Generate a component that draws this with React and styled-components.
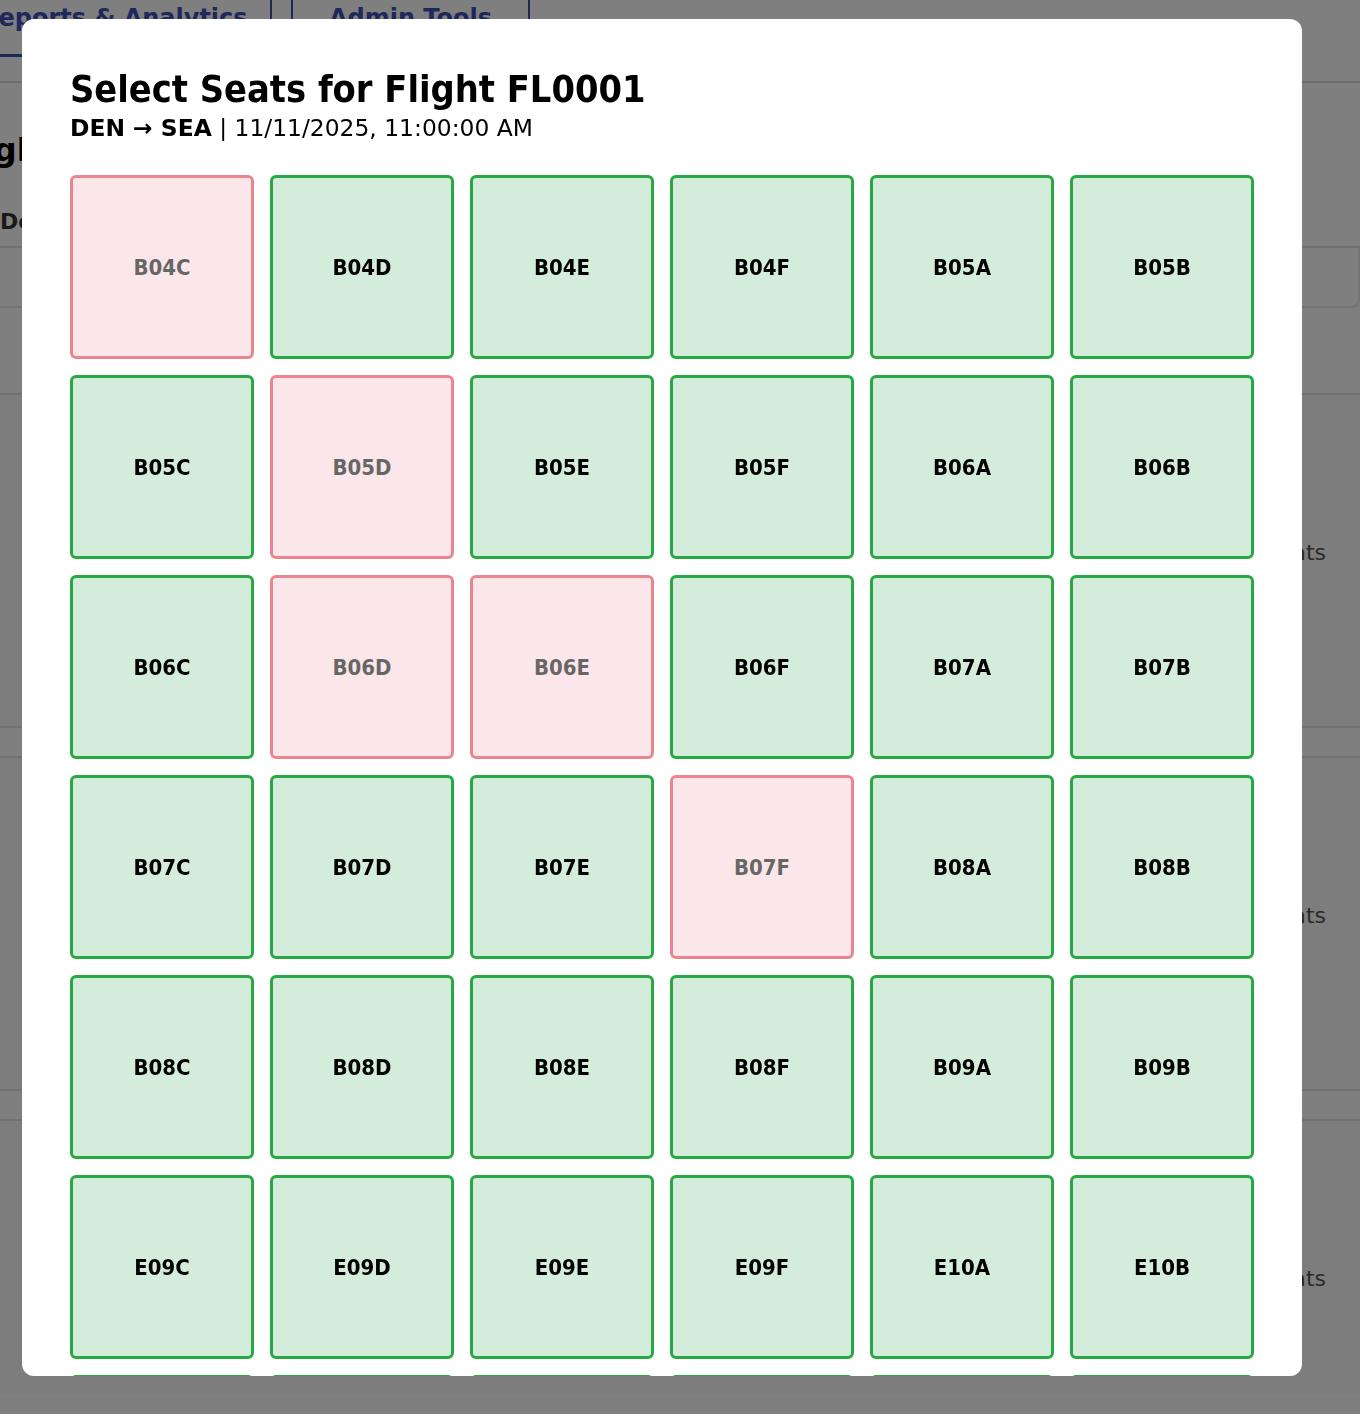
import React from 'react'
import styled, { createGlobalStyle } from 'styled-components'

const GlobalStyle = createGlobalStyle`
  html, body {
    margin: 0;
    padding: 0;
    background: #fff;
  }
  body {
    font-family: "DejaVu Sans", Verdana, sans-serif;
    overflow: hidden;
  }
`

const seats = [
  'B04C', 'B04D', 'B04E', 'B04F', 'B05A', 'B05B',
  'B05C', 'B05D', 'B05E', 'B05F', 'B06A', 'B06B',
  'B06C', 'B06D', 'B06E', 'B06F', 'B07A', 'B07B',
  'B07C', 'B07D', 'B07E', 'B07F', 'B08A', 'B08B',
  'B08C', 'B08D', 'B08E', 'B08F', 'B09A', 'B09B',
  'E09C', 'E09D', 'E09E', 'E09F', 'E10A', 'E10B',
  'E10C', 'E10D', 'E10E', 'E10F', 'E11A', 'E11B',
]

const booked = ['B04C', 'B05D', 'B06D', 'B06E', 'B07F']

/* ---------- page behind the dialog ---------- */

const Page = styled.div`
  height: 1414px;
  margin-left: -40px;
`

const TabBar = styled.div`
  display: flex;
  gap: 19px;
  height: 101px;
  margin-top: -20px;
  border-bottom: 2px solid #dcdcdc;
`

const Tab = styled.div`
  padding: 24px ${p => (p.$first ? 38 : 20)}px 0 20px;
  height: 77px;
  box-sizing: border-box;
  border-right: 2px solid #3f51b5;
  border-left: ${p => (p.$first ? 'none' : '2px solid #3f51b5')};
  border-bottom: ${p => (p.$active ? '3px solid #3f51b5' : 'none')};
  color: #3f51b5;
  font-weight: 700;
  font-size: 24px;
  white-space: nowrap;
  text-align: ${p => (p.$first ? 'right' : 'center')};
  width: ${p => p.$w}px;
`

const PageTitle = styled.h1`
  margin: 48px 0 0 -10px;
  font-size: 32px;
  line-height: 1.2;
  color: #000;
`

const FilterLabel = styled.div`
  margin-top: 40px;
  padding: 0 0 12px 40px;
  font-size: 22px;
  font-weight: 700;
  color: #333;
  border-bottom: 2px solid #e3e3e3;
`

const SearchBox = styled.div`
  height: 60px;
  box-sizing: border-box;
  border: 2px solid #e6e6e6;
  border-top: none;
  border-radius: 0 0 8px 8px;
  margin-bottom: 85px;
`

const FlightCard = styled.div`
  height: 335px;
  box-sizing: border-box;
  background: #fafafa;
  border-top: 2px solid #e2e2e2;
  border-bottom: 2px solid #e2e2e2;
  margin-bottom: 28px;
  display: flex;
  justify-content: flex-end;
  align-items: flex-start;
  padding: 145px 34px 0 0;
  color: #555;
  font-size: 22px;
`

/* ---------- seat dialog ---------- */

const Overlay = styled.div`
  position: fixed;
  inset: 0;
  background: rgba(0, 0, 0, 0.5);
  display: flex;
  align-items: flex-start;
  padding: 19px 0 0 22px;
`

const Dialog = styled.div`
  width: 1280px;
  height: 1357px;
  box-sizing: border-box;
  padding: 48px;
  background: #fff;
  border-radius: 12px;
  overflow: hidden;
`

const Title = styled.h2`
  margin: 0;
  font-size: 37.6px;
  line-height: 1.2;
  font-weight: 700;
  font-stretch: condensed;
  font-family: "DejaVu Sans Condensed", "DejaVu Sans", sans-serif;
  color: #000;
`

const Route = styled.p`
  margin: 2px 0 33px;
  font-size: 23.4px;
  line-height: 1.2;
  font-family: "DejaVu Sans", sans-serif;
  color: #000;
`

const SeatGrid = styled.div`
  display: grid;
  grid-template-columns: repeat(6, 1fr);
  gap: 16px;
`

const Seat = styled.button`
  height: 184px;
  padding: 0;
  border-radius: 6px;
  border: 3px solid ${p => (p.$taken ? '#dc3545' : '#28a745')};
  background: ${p => (p.$taken ? '#f8d7da' : '#d4edda')};
  opacity: ${p => (p.$taken ? 0.6 : 1)};
  color: #000;
  font-weight: 700;
  font-size: 22px;
  font-stretch: condensed;
  font-family: "DejaVu Sans Condensed", "DejaVu Sans", sans-serif;
  cursor: ${p => (p.$taken ? 'not-allowed' : 'pointer')};
`

export default function App() {
  return (
    <>
      <GlobalStyle />
      <Page>
        <TabBar>
          <Tab $active $first $w={312}>Reports &amp; Analytics</Tab>
          <Tab $w={239}>Admin Tools</Tab>
        </TabBar>
        <PageTitle>Flights</PageTitle>
        <FilterLabel>Departure</FilterLabel>
        <SearchBox />
        <FlightCard>Seats</FlightCard>
        <FlightCard>Seats</FlightCard>
        <FlightCard>Seats</FlightCard>
      </Page>
      <Overlay>
        <Dialog>
          <Title>Select Seats for Flight FL0001</Title>
          <Route>
            <strong>DEN → SEA</strong> | 11/11/2025, 11:00:00 AM
          </Route>
          <SeatGrid>
            {seats.map(code => (
              <Seat key={code} $taken={booked.includes(code)} disabled={booked.includes(code)}>
                {code}
              </Seat>
            ))}
          </SeatGrid>
        </Dialog>
      </Overlay>
    </>
  )
}
